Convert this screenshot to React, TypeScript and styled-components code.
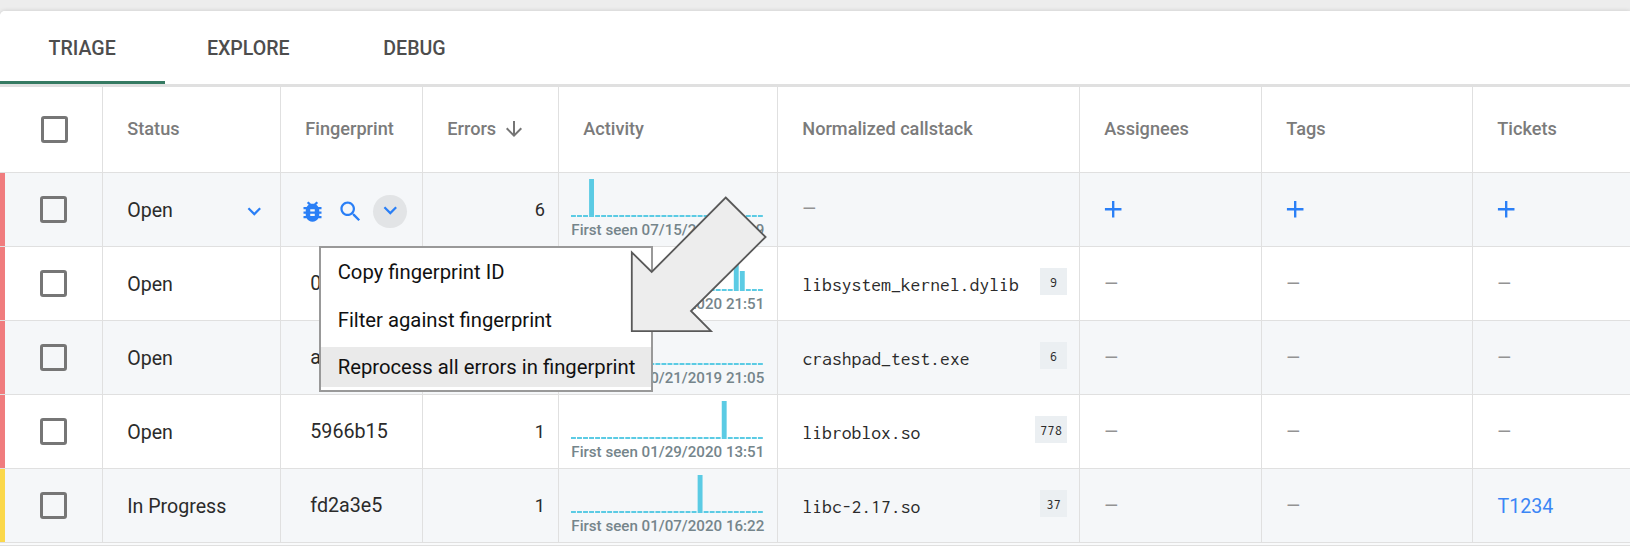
import React from 'react';
import styled, { createGlobalStyle, css } from 'styled-components';

const GlobalStyle = createGlobalStyle`
  *, *::before, *::after { box-sizing: border-box; }
  html, body { margin: 0; height: 546px; overflow: hidden; background: #ececec; }
  body { font-family: Roboto, "Liberation Sans", sans-serif; color: #2b2b2b; }
`;

const BLUE = '#2a7ff6';
const LINE = '#e0e0e0';
const CYAN = '#5bcbe4';

const Page = styled.div`
  position: relative;
  width: 1630px;
  height: 546px;
  padding-top: 11px;
  overflow: hidden;
  background: #ededed;
`;

const Card = styled.main`
  height: 535px;
  background: #f9fafb;
  border-top-left-radius: 5px;
  box-shadow: 0 0 4px rgba(0, 0, 0, 0.16);
`;

const Tabs = styled.nav`
  display: flex;
  height: 76px;
  background: #fff;
  border-top-left-radius: 5px;
  border-bottom: 3px solid ${LINE};
`;

const Tab = styled.div<{ $active?: boolean }>`
  width: 166.2px;
  height: 73px;
  line-height: 76px;
  text-align: center;
  font-size: 19.6px;
  font-weight: 500;
  color: #4d4d4d;
  &:first-child { margin-left: -1px; }
  ${p => p.$active && css`box-shadow: inset 0 -3px 0 #357a62;`}
`;

const columns = css`
  display: grid;
  grid-template-columns: 103px 178px 142px 136px 219px 302px 182px 211px 157px;
`;

const HeaderRow = styled.div`
  ${columns}
  height: 86px;
  border-bottom: 1px solid ${LINE};
  background: #fff;
`;

const HeaderCell = styled.div`
  display: flex;
  align-items: center;
  padding: 0 0 2px 24.3px;
  border-right: 1px solid ${LINE};
  font-size: 18.15px;
  font-weight: 500;
  color: #7b7b7b;
  &:last-child { border-right: 0; }
`;

const SortIcon = styled.svg`
  width: 24px;
  height: 24px;
  margin: 1px 0 0 5.5px;
  fill: #757575;
`;

const Row = styled.div<{ $shaded: boolean }>`
  ${columns}
  height: 74px;
  border-bottom: 1px solid ${LINE};
  background: ${p => (p.$shaded ? '#f5f7f9' : '#fff')};
`;

const Cell = styled.div`
  position: relative;
  display: flex;
  align-items: center;
  min-width: 0;
  padding: 1px 0 0 24.5px;
  border-right: 1px solid ${LINE};
  font-size: 19.7px;
  white-space: nowrap;
  &:last-child { border-right: 0; }
`;

const SelectCell = styled(Cell)<{ $tone: string }>`
  padding: 0 0 0 34.6px;
  border-left: 5px solid ${p => p.$tone};
`;

const HeaderSelectCell = styled(HeaderCell)`
  padding: 0 0 0 41px;
`;

const Checkbox = styled.span`
  width: 27px;
  height: 27px;
  border: 3px solid #767676;
  border-radius: 3px;
`;

const StatusCell = styled(Cell)`
  justify-content: space-between;
  padding-right: 12.7px;
  padding-left: 24.2px;
  font-size: 19.6px;
`;

const Icon = styled.svg<{ $size: number; $drop?: number }>`
  flex: none;
  width: ${p => p.$size}px;
  height: ${p => p.$size}px;
  margin-top: ${p => p.$drop ?? 0}px;
  fill: ${BLUE};
`;

const FingerprintCell = styled(Cell)`
  padding: 0 0 1px 29.3px;
`;

const FingerprintActions = styled(Cell)`
  gap: 10.6px;
  padding: 4.4px 0 0 18.4px;
`;

const RoundButton = styled.span`
  display: flex;
  align-items: center;
  justify-content: center;
  width: 33.5px;
  height: 33.5px;
  margin-left: -1.3px;
  border-radius: 50%;
  background: #e2e4e6;
`;

const ErrorsCell = styled(Cell)`
  justify-content: flex-end;
  padding: 0 13px 1px 0;
  font-size: 18.15px;
`;

const ActivityCell = styled(Cell)`
  flex-direction: column;
  align-items: flex-start;
  padding: 6px 0 0 12.3px;
`;

const Chart = styled.svg`
  flex: none;
  width: 193px;
  height: 38px;
`;

const FirstSeen = styled.span`
  margin-top: 4px;
  line-height: 18px;
  font-size: 15.13px;
  font-weight: 500;
  color: #75858b;
`;

const CallstackCell = styled(Cell)`
  justify-content: space-between;
  padding: 0 12px 0 24.4px;
`;

const Callstack = styled.span`
  padding-top: 1px;
  font-family: Inconsolata, "Liberation Mono", monospace;
  font-size: 19.68px;
`;

const Badge = styled.span`
  min-width: 27px;
  height: 27px;
  padding: 0 5px;
  margin-bottom: 4px;
  line-height: 29px;
  text-align: center;
  background: #ebeff2;
  font-family: Inconsolata, "Liberation Mono", monospace;
  font-size: 14.76px;
`;

const Empty = styled.span`
  margin-top: -3px;
  font-size: 17.4px;
  font-weight: 500;
  color: #939393;
`;

const TicketLink = styled.a`
  color: #3b86f5;
  font-size: 19.6px;
`;

const Menu = styled.div`
  position: absolute;
  z-index: 2;
  top: 73px;
  left: 38px;
  width: 334px;
  height: 146px;
  padding-top: 4.2px;
  border: 2px solid #999;
  background: #fff;
`;

const MenuItem = styled.div<{ $selected?: boolean }>`
  height: 40px;
  margin-bottom: 7.4px;
  padding-left: 16.7px;
  line-height: 40px;
  font-size: 20.25px;
  color: #111;
  background: ${p => (p.$selected ? '#eaeaea' : 'transparent')};
`;

const Pointer = styled.svg`
  position: absolute;
  z-index: 3;
  top: 195px;
  left: 629px;
  width: 140px;
  height: 140px;
`;

const Footer = styled.div`
  height: 3px;
  border-bottom: 1px solid ${LINE};
`;

const CHEVRON = 'M16.59 8.59 12 13.17 7.41 8.59 6 10l6 6 6-6z';
const BUG =
  'M20 8h-2.81c-.45-.78-1.07-1.45-1.82-1.96L17 4.41 15.59 3l-2.17 2.17C12.96 5.06 12.49 5 12 5s-.96.06-1.41.17L8.41 3 7 4.41l1.62 1.63C7.88 6.55 7.26 7.22 6.81 8H4v2h2.09c-.05.33-.09.66-.09 1v1H4v2h2v1c0 .34.04.67.09 1H4v2h2.81c1.04 1.79 2.97 3 5.19 3s4.15-1.21 5.19-3H20v-2h-2.09c.05-.33.09-.66.09-1v-1h2v-2h-2v-1c0-.34-.04-.67-.09-1H20V8zm-6 8h-4v-2h4v2zm0-4h-4v-2h4v2z';
const SEARCH =
  'M15.5 14h-.79l-.28-.27C15.41 12.59 16 11.11 16 9.5 16 5.91 13.09 3 9.5 3S3 5.91 3 9.5 5.91 16 9.5 16c1.61 0 3.09-.59 4.23-1.57l.27.28v.79l5 4.99L20.49 19l-4.99-5zm-6 0C7.01 14 5 11.99 5 9.5S7.01 5 9.5 5 14 7.01 14 9.5 11.99 14 9.5 14z';
const PLUS = 'M19 13h-6v6h-2v-6H5v-2h6V5h2v6h6v2z';
const ARROW_DOWN = 'M20 12l-1.41-1.41L13 16.17V4h-2v12.17l-5.58-5.59L4 12l8 8 8-8z';

const SLOTS = 32;
const PITCH = 6.03;

function Activity({ bars, seen }: { bars: Record<number, number>; seen: string }) {
  return (
    <ActivityCell>
      <Chart viewBox="0 0 193 38">
        {Array.from({ length: SLOTS }, (_, i) => {
          const h = bars[i] ?? 2;
          return <rect key={i} x={i * PITCH} y={38 - h} width={4.9} height={h} fill={CYAN} />;
        })}
      </Chart>
      <FirstSeen>First seen {seen}</FirstSeen>
    </ActivityCell>
  );
}

interface Entry {
  tone: string;
  status: string;
  fingerprint?: string;
  errors: string;
  bars: Record<number, number>;
  seen: string;
  callstack?: string;
  frames?: string;
  ticket?: string;
  hovered?: boolean;
}

const RED = '#f07c7e';
const YELLOW = '#fbd84b';

const entries: Entry[] = [
  { tone: RED, status: 'Open', errors: '6', bars: { 3: 38 }, seen: '07/15/2019 12:39', hovered: true },
  { tone: RED, status: 'Open', fingerprint: '0', errors: '', bars: { 27: 38, 28: 20 }, seen: '01/30/2020 21:51', callstack: 'libsystem_kernel.dylib', frames: '9' },
  { tone: RED, status: 'Open', fingerprint: 'a', errors: '', bars: {}, seen: '10/21/2019 21:05', callstack: 'crashpad_test.exe', frames: '6' },
  { tone: RED, status: 'Open', fingerprint: '5966b15', errors: '1', bars: { 25: 38 }, seen: '01/29/2020 13:51', callstack: 'libroblox.so', frames: '778' },
  { tone: YELLOW, status: 'In Progress', fingerprint: 'fd2a3e5', errors: '1', bars: { 21: 38 }, seen: '01/07/2020 16:22', callstack: 'libc-2.17.so', frames: '37', ticket: 'T1234' },
];

function Glyph({ d, size, drop }: { d: string; size: number; drop?: number }) {
  return (
    <Icon viewBox="0 0 24 24" $size={size} $drop={drop}>
      <path d={d} />
    </Icon>
  );
}

const AddCell = styled(Cell)`
  padding: 0 0 0 19.2px;
`;

function OptionalCell({ hovered, ticket }: { hovered?: boolean; ticket?: string }) {
  if (hovered) return <AddCell><Glyph d={PLUS} size={28.4} /></AddCell>;
  return <Cell>{ticket ? <TicketLink>{ticket}</TicketLink> : <Empty>—</Empty>}</Cell>;
}

export default function App() {
  return (
    <Page>
      <GlobalStyle />
      <Card>
        <Tabs>
          <Tab $active>TRIAGE</Tab>
          <Tab>EXPLORE</Tab>
          <Tab>DEBUG</Tab>
        </Tabs>
        <HeaderRow>
          <HeaderSelectCell><Checkbox /></HeaderSelectCell>
          <HeaderCell>Status</HeaderCell>
          <HeaderCell>Fingerprint</HeaderCell>
          <HeaderCell>
            Errors
            <SortIcon viewBox="0 0 24 24"><path d={ARROW_DOWN} /></SortIcon>
          </HeaderCell>
          <HeaderCell>Activity</HeaderCell>
          <HeaderCell>Normalized callstack</HeaderCell>
          <HeaderCell>Assignees</HeaderCell>
          <HeaderCell>Tags</HeaderCell>
          <HeaderCell>Tickets</HeaderCell>
        </HeaderRow>
        {entries.map((e, i) => (
          <Row key={i} $shaded={i % 2 === 0}>
            <SelectCell $tone={e.tone}><Checkbox /></SelectCell>
            <StatusCell>
              {e.status}
              {e.hovered && <Glyph d={CHEVRON} size={26.6} drop={3} />}
            </StatusCell>
            {e.hovered ? (
              <FingerprintActions>
                <Glyph d={BUG} size={27} />
                <Glyph d={SEARCH} size={27} />
                <RoundButton><Glyph d={CHEVRON} size={26.6} drop={-2} /></RoundButton>
                <Menu>
                  <MenuItem>Copy fingerprint ID</MenuItem>
                  <MenuItem>Filter against fingerprint</MenuItem>
                  <MenuItem $selected>Reprocess all errors in fingerprint</MenuItem>
                </Menu>
              </FingerprintActions>
            ) : (
              <FingerprintCell>{e.fingerprint}</FingerprintCell>
            )}
            <ErrorsCell>{e.errors}</ErrorsCell>
            <Activity bars={e.bars} seen={e.seen} />
            <CallstackCell>
              {e.callstack ? <Callstack>{e.callstack}</Callstack> : <Empty>—</Empty>}
              {e.frames && <Badge>{e.frames}</Badge>}
            </CallstackCell>
            <OptionalCell hovered={e.hovered} />
            <OptionalCell hovered={e.hovered} />
            <OptionalCell hovered={e.hovered} ticket={e.ticket} />
          </Row>
        ))}
        <Footer />
      </Card>
      <Pointer viewBox="629 195 140 140">
        <polygon
          points="725.7,197.5 765.6,237 691,311 711,331.2 631.8,331.2 631.8,252.3 651.7,272"
          fill="#ededed"
          stroke="#595959"
          strokeWidth="1.8"
        />
      </Pointer>
    </Page>
  );
}
